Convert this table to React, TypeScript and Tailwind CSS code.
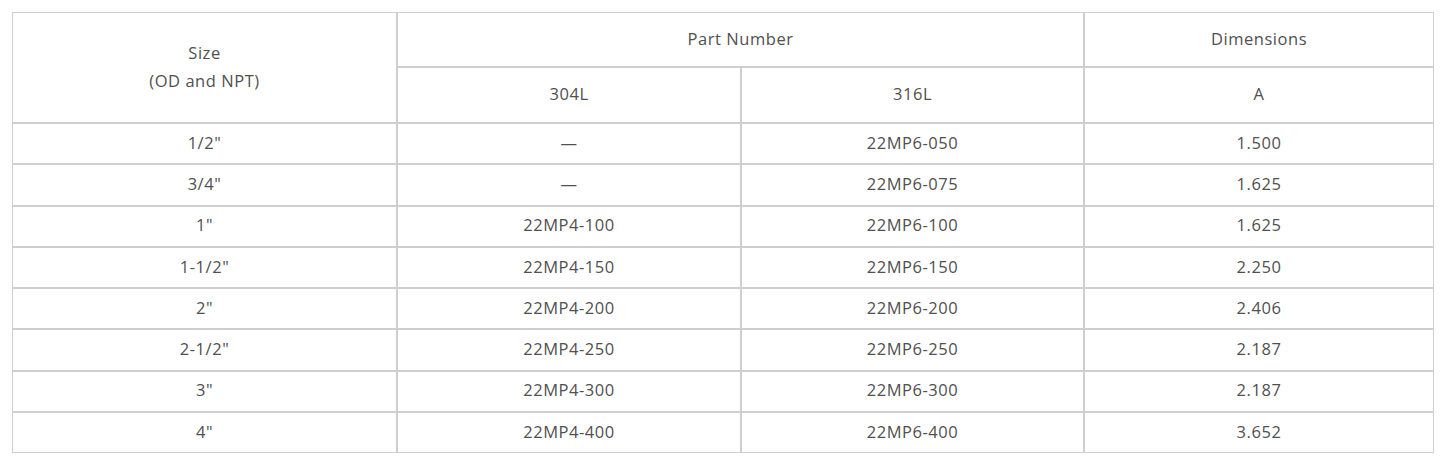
import React from 'react';

const rows = [
  { size: '1/2"', p304: '—', p316: '22MP6-050', a: '1.500' },
  { size: '3/4"', p304: '—', p316: '22MP6-075', a: '1.625' },
  { size: '1"', p304: '22MP4-100', p316: '22MP6-100', a: '1.625' },
  { size: '1-1/2"', p304: '22MP4-150', p316: '22MP6-150', a: '2.250' },
  { size: '2"', p304: '22MP4-200', p316: '22MP6-200', a: '2.406' },
  { size: '2-1/2"', p304: '22MP4-250', p316: '22MP6-250', a: '2.187' },
  { size: '3"', p304: '22MP4-300', p316: '22MP6-300', a: '2.187' },
  { size: '4"', p304: '22MP4-400', p316: '22MP6-400', a: '3.652' },
];

const cell = 'border border-[#cfcfcf] text-center align-middle p-0 pb-[1px]';

export default function App() {
  return (
    <div className="w-[1445px] h-[459px] bg-white px-3 pt-3 font-['Open_Sans',sans-serif] text-[16.5px] tracking-[0.55px] text-[#505050]">
      <table className="w-[1422px] border-separate border-spacing-0 table-fixed">
        <colgroup>
          <col className="w-[385px]" />
          <col className="w-[344px]" />
          <col className="w-[343px]" />
          <col className="w-[350px]" />
        </colgroup>
        <thead>
          <tr className="h-[55px]">
            <th rowSpan={2} className={`${cell} font-normal leading-[28px]`}>
              Size
              <br />
              (OD and NPT)
            </th>
            <th colSpan={2} className={`${cell} font-normal`}>
              Part Number
            </th>
            <th className={`${cell} font-normal`}>Dimensions</th>
          </tr>
          <tr className="h-[56px]">
            <th className={`${cell} font-normal`}>304L</th>
            <th className={`${cell} font-normal`}>316L</th>
            <th className={`${cell} font-normal`}>A</th>
          </tr>
        </thead>
        <tbody>
          {rows.map((r, i) => (
            <tr key={i} className="h-[41.25px]">
              <td className={cell}>{r.size}</td>
              <td className={cell}>{r.p304}</td>
              <td className={cell}>{r.p316}</td>
              <td className={cell}>{r.a}</td>
            </tr>
          ))}
        </tbody>
      </table>
    </div>
  );
}
